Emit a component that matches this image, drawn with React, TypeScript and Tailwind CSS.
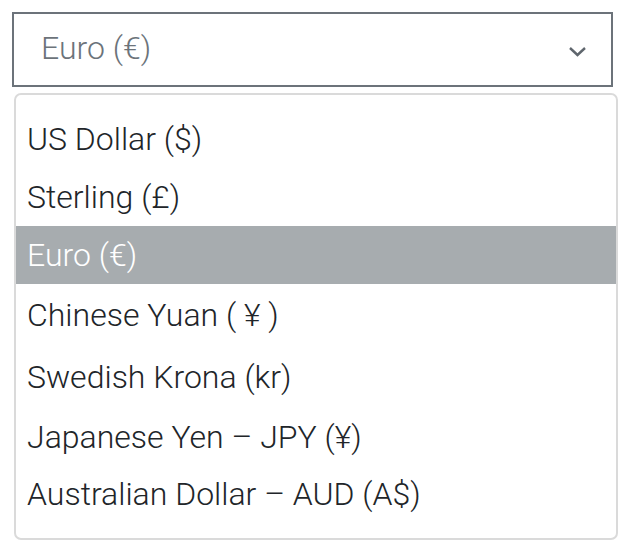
const options = [
  { label: "US Dollar ($)", h: "h-[58px]" },
  { label: "Sterling (£)", h: "h-[58px]" },
  { label: "Euro (€)", h: "h-[58px]", active: true },
  { label: "Chinese Yuan ( ¥ )", h: "h-[62px]" },
  { label: "Swedish Krona (kr)", h: "h-[62px]" },
  { label: "Japanese Yen – JPY (¥)", h: "h-[58px]" },
  { label: "Australian Dollar – AUD (A$)", h: "h-[56px]" },
];

export default function App() {
  return (
    <div className="min-h-screen bg-white pt-[12px] pl-[12px] font-['Roboto',sans-serif] font-light">
      {/* closed select */}
      <div className="w-[601px] h-[75px] border-2 border-[#6c737a] flex items-center justify-between pl-[27px] pr-[24px]">
        <span className="text-[32px] text-[#6c737a] leading-none mb-[4px]">Euro (€)</span>
        <svg width="19" height="11" viewBox="0 0 19 11" className="mt-[3px]">
          <path d="M2 2 L9.5 9 L17 2" fill="none" stroke="#5f666d" strokeWidth="2.4" />
        </svg>
      </div>

      {/* open option list */}
      <div className="mt-[6px] ml-[2px] w-[604px] h-[447px] border-2 border-[#dadada] rounded-[7px] pt-[15px] pb-[16px]">
        {options.map((opt) => (
          <div
            key={opt.label}
            className={`${opt.h} flex items-center pl-[11px] text-[32px] leading-none ${
              opt.active ? "bg-[#a7acaf] text-white" : "text-[#212529]"
            }`}
          >
            <span className="mb-[1px]">{opt.label}</span>
          </div>
        ))}
      </div>
    </div>
  );
}
